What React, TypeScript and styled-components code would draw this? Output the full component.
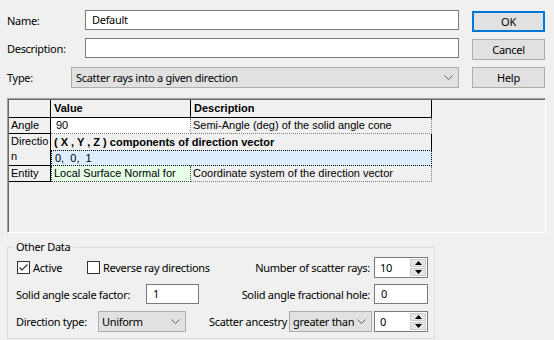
import React from 'react';
import styled, { createGlobalStyle } from 'styled-components';

const Global = createGlobalStyle`
  html, body { margin: 0; padding: 0; background: #f0f0f0; }
  body {
    width: 554px; height: 340px; overflow: hidden;
    font-family: "Noto Sans", "Open Sans", sans-serif; font-size: 11px; color: #000;
    letter-spacing: -0.3px;
  }
  * { box-sizing: border-box; }
`;

const Window = styled.div`
  width: 554px;
  height: 340px;
  padding: 10px 0 0 7px;
  display: flex;
  flex-direction: column;
`;

const Top = styled.div`
  display: flex;
  height: 78px;
  gap: 13px;
`;

const FormCol = styled.div`
  width: 452px;
  display: flex;
  flex-direction: column;
  gap: 8px;
`;

const FormRow = styled.div<{ $mt?: number }>`
  display: flex;
  align-items: center;
  height: 20px;
  margin-top: ${p => p.$mt ?? 0}px;
`;

const Label = styled.span<{ $w?: number }>`
  width: ${p => (p.$w ? `${p.$w}px` : 'auto')};
  flex: none;
  white-space: nowrap;
`;

const TextBox = styled.div<{ $w?: number }>`
  ${p => (p.$w ? `width:${p.$w}px; flex:none;` : 'flex: 1;')}
  height: 20px;
  background: #fff;
  border: 1px solid #7a7a7a;
  padding-left: 6px;
  line-height: 18px;
  white-space: nowrap;
`;

const Combo = styled.div<{ $w?: number; $pl?: number }>`
  ${p => (p.$w ? `width:${p.$w}px; flex:none;` : 'flex: 1;')}
  height: 21px;
  background: #e1e1e1;
  border: 1px solid #adadad;
  padding: 0 5px 0 ${p => p.$pl ?? 3}px;
  display: flex;
  align-items: center;
  justify-content: space-between;
  gap: 2px;
  white-space: nowrap;
`;

const ButtonCol = styled.div`
  width: 73px;
  padding-top: 1px;
  display: flex;
  flex-direction: column;
  gap: 7px;
`;

const Button = styled.div<{ $default?: boolean }>`
  height: 21px;
  background: #e1e1e1;
  border: ${p => (p.$default ? '2px solid #0078d7' : '1px solid #adadad')};
  display: flex;
  align-items: center;
  justify-content: center;
`;

const GridFrame = styled.div`
  margin-top: 10px;
  width: 539px;
  height: 135px;
  border-top: 1px solid #a0a0a0;
  border-left: 1px solid #a0a0a0;
  border-right: 1px solid #ffffff;
  border-bottom: 1px solid #ffffff;
  box-shadow: inset 1px 1px 0 #696969;
  padding: 1px 0 0 1px;
  background: #f0f0f0;
`;

const Grid = styled.div`
  display: grid;
  grid-template-columns: 42px 140px 241px;
  grid-template-rows: 18px 16px 16px 16px 16px;
  font-family: "Liberation Sans", Arial, sans-serif;
  font-size: 11px;
  letter-spacing: 0;
`;

type CellKind = 'corner' | 'head' | 'rowhead' | 'value' | 'desc' | 'title' | 'focus' | 'green';

const cellStyles: Record<CellKind, string> = {
  corner: 'border-right:1px solid #000; border-bottom:1px solid #000;',
  head: 'font-weight:bold; border-right:1px solid #000; border-bottom:1px solid #000; padding-left:3px;',
  rowhead: 'border-right:1px solid #000; border-bottom:1px solid #000; padding-left:2px; align-items:flex-start;',
  value: 'background:#fff; border-right:1px dotted #808080; border-bottom:1px dotted #808080; padding-left:5px;',
  desc: 'border-right:1px dotted #808080; border-bottom:1px dotted #808080; padding-left:2px;',
  title: 'font-weight:bold; border-right:1px solid #000; padding-left:3px;',
  focus: 'background:#ddeeff; border:1px dotted #000; padding-left:3px;',
  green: 'background:#e6ffe6; border-left:1px dotted #404040; border-right:1px dotted #404040; border-bottom:1px dotted #404040; padding-left:2px;',
};

const Cell = styled.div<{ $kind: CellKind; $col?: string; $row?: string }>`
  display: flex;
  align-items: center;
  white-space: nowrap;
  overflow: hidden;
  line-height: 15px;
  ${p => (p.$col ? `grid-column: ${p.$col};` : '')}
  ${p => (p.$row ? `grid-row: ${p.$row};` : '')}
  ${p => cellStyles[p.$kind]}
`;

const Group = styled.fieldset`
  margin: 6px 0 0 0;
  width: 428px;
  height: 100px;
  border: 1px solid #dcdcdc;
  padding: 1px 6px 0 8px;
  display: flex;
  flex-direction: column;
  gap: 5px;
`;

const Legend = styled.legend`
  padding: 0 3px;
  margin-left: -3px;
  line-height: 16px;
`;

const GroupRow = styled.div`
  display: flex;
  align-items: center;
  height: 22px;
`;

const LeftPart = styled.div`
  display: flex;
  align-items: center;
`;

const RightPart = styled.div<{ $gap?: number }>`
  margin-left: auto;
  display: flex;
  align-items: center;
  gap: ${p => p.$gap ?? 4}px;
`;

const Check = styled.div<{ $w: number }>`
  width: ${p => p.$w}px;
  display: flex;
  align-items: center;
  gap: 3px;
  padding-left: 1px;
`;

const Box = styled.span`
  width: 13px;
  height: 13px;
  border: 1px solid #333;
  background: #fff;
  display: flex;
  align-items: center;
  justify-content: center;
`;

const Spin = styled.div`
  width: 54px;
  height: 21px;
  flex: none;
  border: 1px solid #7a7a7a;
  background: #fff;
  display: flex;
`;

const SpinValue = styled.span`
  flex: 1;
  padding-left: 5px;
  line-height: 19px;
`;

const SpinButtons = styled.div`
  width: 17px;
  padding: 1px 1px 1px 0;
  display: flex;
  flex-direction: column;
  gap: 1px;
`;

const SpinBtn = styled.div`
  flex: 1;
  background: #e5e5e5;
  border: 1px solid #cccccc;
  display: flex;
  align-items: center;
  justify-content: center;
`;

const Chevron = () => (
  <svg width="9" height="5" viewBox="0 0 9 5">
    <polyline points="0.5,0.5 4.5,4.5 8.5,0.5" fill="none" stroke="#606060" strokeWidth="1" />
  </svg>
);

const Tri = ({ up }: { up?: boolean }) => (
  <svg width="7" height="4" viewBox="0 0 7 4">
    <polygon points={up ? '0,4 7,4 3.5,0' : '0,0 7,0 3.5,4'} fill="#000" />
  </svg>
);

const SpinBox = ({ value }: { value: string }) => (
  <Spin>
    <SpinValue>{value}</SpinValue>
    <SpinButtons>
      <SpinBtn><Tri up /></SpinBtn>
      <SpinBtn><Tri /></SpinBtn>
    </SpinButtons>
  </Spin>
);

export default function App() {
  return (
    <>
      <Global />
      <Window>
        <Top>
          <FormCol>
            <FormRow>
              <Label $w={78}>Name:</Label>
              <TextBox>Default</TextBox>
            </FormRow>
            <FormRow>
              <Label $w={78}>Description:</Label>
              <TextBox />
            </FormRow>
            <FormRow $mt={1}>
              <Label $w={64}>Type:</Label>
              <Combo $pl={4}>
                <span>Scatter rays into a given direction</span>
                <Chevron />
              </Combo>
            </FormRow>
          </FormCol>
          <ButtonCol>
            <Button $default>OK</Button>
            <Button>Cancel</Button>
            <Button>Help</Button>
          </ButtonCol>
        </Top>

        <GridFrame>
          <Grid>
            <Cell $kind="corner" />
            <Cell $kind="head">Value</Cell>
            <Cell $kind="head">Description</Cell>

            <Cell $kind="rowhead">Angle</Cell>
            <Cell $kind="value">90</Cell>
            <Cell $kind="desc">Semi-Angle (deg) of the solid angle cone</Cell>

            <Cell $kind="rowhead" $row="3 / span 2">
              <span>Directio<br />n</span>
            </Cell>
            <Cell $kind="title" $col="2 / span 2">( X , Y , Z ) components of direction vector</Cell>
            <Cell $kind="focus" $col="2 / span 2">0,&nbsp; 0,&nbsp; 1</Cell>

            <Cell $kind="rowhead">Entity</Cell>
            <Cell $kind="green">Local Surface Normal for</Cell>
            <Cell $kind="desc">Coordinate system of the direction vector</Cell>
          </Grid>
        </GridFrame>

        <Group>
          <Legend>Other Data</Legend>
          <GroupRow>
            <LeftPart>
              <Check $w={70}>
                <Box>
                  <svg width="11" height="11" viewBox="0 0 11 11">
                    <polyline points="1.5,5.5 4,8 9.5,2.5" fill="none" stroke="#333" strokeWidth="1.2" />
                  </svg>
                </Box>
                <span>Active</span>
              </Check>
              <Check $w={140}>
                <Box />
                <span>Reverse ray directions</span>
              </Check>
            </LeftPart>
            <RightPart>
              <span>Number of scatter rays:</span>
              <SpinBox value="10" />
            </RightPart>
          </GroupRow>
          <GroupRow>
            <LeftPart>
              <Label $w={130}>Solid angle scale factor:</Label>
              <TextBox $w={53}>1</TextBox>
            </LeftPart>
            <RightPart>
              <span>Solid angle fractional hole:</span>
              <TextBox $w={54}>0</TextBox>
            </RightPart>
          </GroupRow>
          <GroupRow>
            <LeftPart>
              <Label $w={82}>Direction type:</Label>
              <Combo $w={88}>
                <span>Uniform</span>
                <Chevron />
              </Combo>
            </LeftPart>
            <RightPart $gap={2}>
              <span>Scatter ancestry</span>
              <Combo $w={83}>
                <span>greater than</span>
                <Chevron />
              </Combo>
              <RightPart>
                <SpinBox value="0" />
              </RightPart>
            </RightPart>
          </GroupRow>
        </Group>
      </Window>
    </>
  );
}
